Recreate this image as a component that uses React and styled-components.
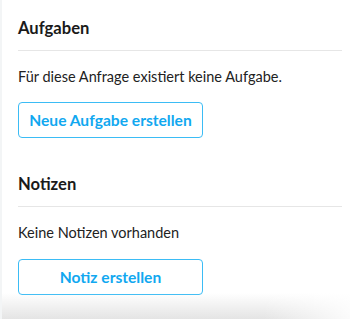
import React from "react"
import styled, { createGlobalStyle } from "styled-components"

const GlobalStyle = createGlobalStyle`
  html, body {
    margin: 0;
    padding: 0;
    background: #ffffff;
  }
  body {
    font-family: "Lato", "Open Sans", sans-serif;
    color: #1c1c1c;
  }
`

function Section({ title, emptyText, action, spaced }) {
  return (
    <Block>
      <Title>{title}</Title>
      <Divider />
      <Empty>{emptyText}</Empty>
      <ActionButton $spaced={spaced}>{action}</ActionButton>
    </Block>
  )
}

function App() {
  return (
    <>
      <GlobalStyle />
      <Panel>
        <Section
          title="Aufgaben"
          emptyText="Für diese Anfrage existiert keine Aufgabe."
          action="Neue Aufgabe erstellen"
        />
        <Section
          title="Notizen"
          emptyText="Keine Notizen vorhanden"
          action="Notiz erstellen"
          spaced
        />
        <BottomFade />
      </Panel>
    </>
  )
}

const Panel = styled.div`
  position: relative;
  width: 350px;
  height: 319px;
  box-sizing: border-box;
  padding: 17px 8px 0 16px;
  border-left: 2px solid #f3f5f6;
  overflow: hidden;
  display: flex;
  flex-direction: column;
  gap: 35px;
`

const Block = styled.section`
  display: flex;
  flex-direction: column;
`

const Title = styled.h2`
  margin: 0;
  font-size: 16.6px;
  font-weight: 700;
  line-height: 22px;
  color: #1a1a1a;
`

const Divider = styled.hr`
  margin: 11px 0 0;
  border: 0;
  border-top: 1px solid #e6e6e6;
`

const Empty = styled.p`
  margin: 17px 0 0;
  font-size: 14.5px;
  line-height: 18px;
  color: #222;
`

const ActionButton = styled.button`
  margin-top: ${(p) => (p.$spaced ? "17px" : "16px")};
  width: 185px;
  height: 36px;
  box-sizing: border-box;
  border: 1px solid #3bbcf5;
  border-radius: 4px;
  background: #fff;
  color: #11a8f0;
  font-family: inherit;
  font-size: 15.6px;
  font-weight: 700;
  cursor: pointer;
`

const BottomFade = styled.div`
  position: absolute;
  left: 0;
  right: 0;
  bottom: 0;
  height: 26px;
  background:
    linear-gradient(to right, rgba(255, 255, 255, 0) 75%, rgba(255, 255, 255, 0.85)),
    linear-gradient(to bottom, rgba(230, 230, 230, 0), #e4e4e4);
  pointer-events: none;
`

export default App
